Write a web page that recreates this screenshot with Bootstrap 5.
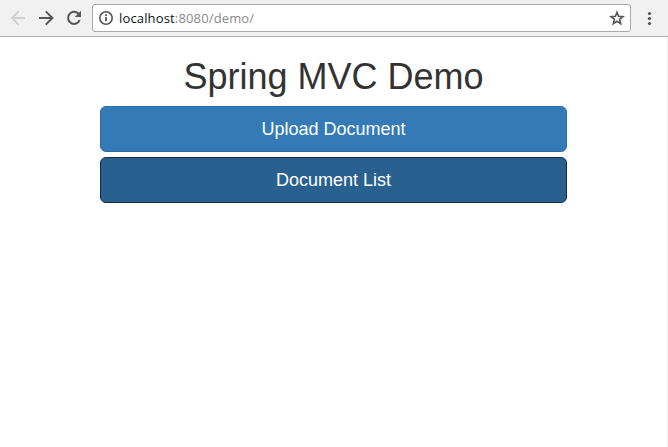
<!DOCTYPE html>
<html lang="en">
<head>
<meta charset="utf-8">
<meta name="viewport" content="width=device-width, initial-scale=1">
<title>Spring MVC Demo</title>
<link href="https://cdn.jsdelivr.net/npm/bootstrap@5.3.0/dist/css/bootstrap.min.css" rel="stylesheet">
<style>
  body { font-family: "Liberation Sans", Arial, sans-serif; color: #333; }
  .browser-bar { height: 37px; background: #f1f1f1; border-bottom: 1px solid #b0b0b0; padding: 4px 9px 4px 8px; }
  .tool { width: 28px; height: 28px; padding: 0; border: 0; background: none; color: #555; }
  .tool.is-off { color: #d0d0d0; }
  .tool svg, .address svg { display: block; }
  .address { height: 28px; margin-right: 9px; padding: 0 5px 0 5px; border: 1px solid #a9a9a9; border-radius: 3px; color: #555; }
  .url { margin-left: 5px; font: 13px/26px "Open Sans", sans-serif; letter-spacing: .15px; color: #111; white-space: nowrap; }
  .url span { color: #8a8a8a; }
  .page { border-right: 1px solid #ececec; }
  .page h1 { font-size: 36px; line-height: 40px; font-weight: 400; margin: 20px 0 9px; }
  .actions { width: 467px; gap: 5px; }
  .btn-demo { height: 46px; padding: 0; font-size: 18px; line-height: 44px; border-radius: 6px; color: #fff; background: #337ab7; border: 1px solid #2e6da4; }
  .btn-demo:hover, .btn-demo.pressed { color: #fff; background: #286090; border-color: #122b40; }
</style>
</head>
<body class="d-flex flex-column vh-100 bg-white overflow-hidden">
<header class="browser-bar d-flex align-items-center flex-shrink-0">
  <div class="d-flex flex-shrink-0">
    <button class="tool is-off" aria-label="Back"><svg width="28" height="28" fill="none" stroke="currentColor" stroke-width="2"><path d="M17 14H4.5M10.6 7.4 4 14l6.6 6.6"/></svg></button>
    <button class="tool" aria-label="Forward"><svg width="28" height="28" fill="none" stroke="currentColor" stroke-width="2"><path d="M3 14h13M9.8 7.4l6.6 6.6-6.6 6.6"/></svg></button>
    <button class="tool" aria-label="Reload"><svg width="28" height="28"><path d="M14.5 9.8A6 6 0 1 0 15.7 16" fill="none" stroke="currentColor" stroke-width="2"/><path d="M17 6.8v6.2h-6.2z" fill="currentColor"/></svg></button>
  </div>
  <div class="address d-flex align-items-center flex-grow-1 bg-white">
    <svg width="16" height="16" fill="none" stroke="currentColor"><circle cx="8" cy="8" r="6.2" stroke-width="1.6"/><path d="M8 7v4.3M8 4.3v1.6" stroke-width="1.8"/></svg>
    <div class="url flex-grow-1">localhost<span>:8080/demo/</span></div>
    <svg width="16" height="16" fill="none" stroke="currentColor" stroke-width="1.6"><path d="M8 2.4 9.6 6.3l4.4.3-3.4 2.8 1.1 4.3L8 11.3l-3.7 2.4 1.1-4.3L2 6.6l4.4-.3z"/></svg>
  </div>
  <button class="tool-menu tool w-auto" aria-label="Menu"><svg width="19" height="28" fill="currentColor"><circle cx="9.5" cy="9.5" r="1.6"/><circle cx="9.5" cy="14.5" r="1.6"/><circle cx="9.5" cy="19.5" r="1.6"/></svg></button>
</header>
<main class="page flex-grow-1 text-center">
  <h1>Spring MVC Demo</h1>
  <div class="actions d-flex flex-column mx-auto">
    <a class="btn btn-lg btn-demo" href="#">Upload Document</a>
    <a class="btn btn-lg btn-demo pressed" href="#">Document List</a>
  </div>
</main>
<script src="https://cdn.jsdelivr.net/npm/bootstrap@5.3.0/dist/js/bootstrap.bundle.min.js"></script>
</body>
</html>
